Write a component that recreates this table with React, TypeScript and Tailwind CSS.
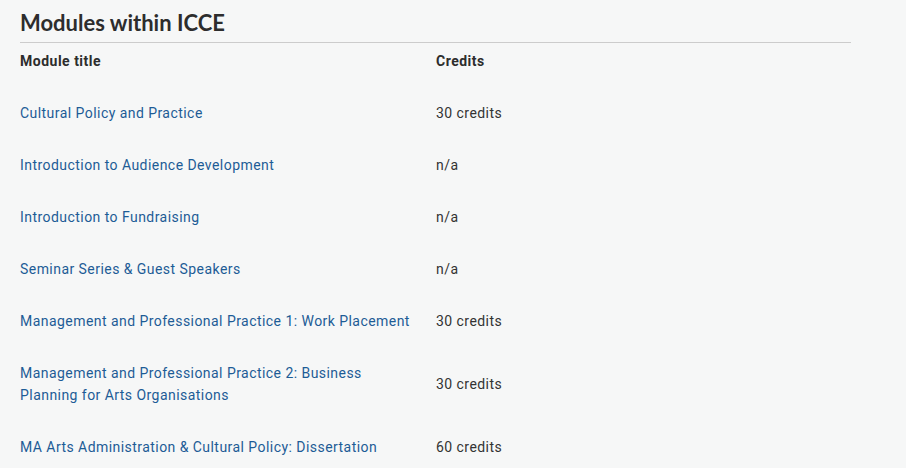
const modules = [
  { title: "Cultural Policy and Practice", credits: "30 credits" },
  { title: "Introduction to Audience Development", credits: "n/a" },
  { title: "Introduction to Fundraising", credits: "n/a" },
  { title: "Seminar Series & Guest Speakers", credits: "n/a" },
  { title: "Management and Professional Practice 1: Work Placement", credits: "30 credits" },
  {
    title: "Management and Professional Practice 2: Business Planning for Arts Organisations",
    credits: "30 credits",
  },
  { title: "MA Arts Administration & Cultural Policy: Dissertation", credits: "60 credits" },
];

export default function App() {
  return (
    <div className="min-h-screen bg-[#f6f7f7] px-5 pt-2 font-['Roboto',sans-serif] text-[#333]">
      <div className="w-[831px]">
        {/* Heading */}
        <h2 className="border-b border-[#cccccc] pb-1 font-['Lato',sans-serif] text-[22px] leading-[30px] font-bold text-[#2d2d2d]">
          Modules within ICCE
        </h2>

        {/* Table head */}
        <div className="flex pt-[7px] pb-[15px] text-[14px] leading-[22px] font-bold tracking-[0.5px] text-[#2d2d2d]">
          <div className="w-[416px]">Module title</div>
          <div className="flex-1">Credits</div>
        </div>

        {/* Rows */}
        {modules.map((m) => (
          <div
            key={m.title}
            className="flex items-center py-[15px] text-[14px] leading-[22px] tracking-[0.45px]"
          >
            <div className="w-[416px] pr-[19px]">
              <a href="#" className="text-[#1d5c96]">
                {m.title}
              </a>
            </div>
            <div className="flex-1 text-[#333]">{m.credits}</div>
          </div>
        ))}
      </div>
    </div>
  );
}
